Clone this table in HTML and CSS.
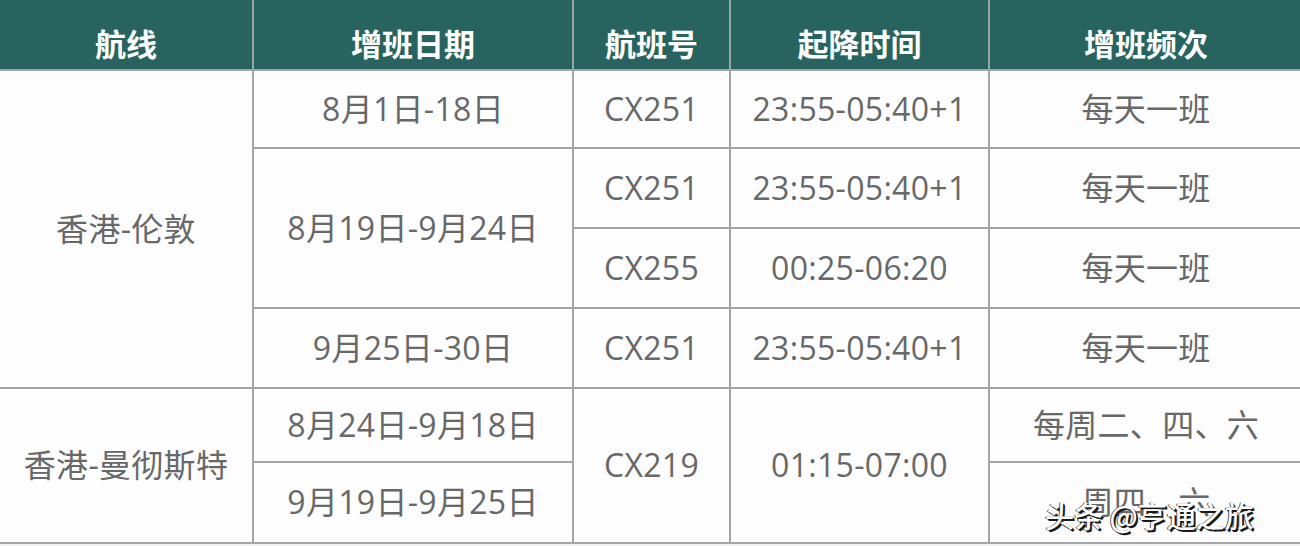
FILE: index.html
```html
<!DOCTYPE html>
<html lang="zh-CN">
<head>
<meta charset="utf-8">
<title>航班增班</title>
<link rel="stylesheet" href="styles.css">
</head>
<body>
<div class="page">
  <table class="flights">
    <colgroup>
      <col class="c-route">
      <col class="c-date">
      <col class="c-no">
      <col class="c-time">
      <col class="c-freq">
    </colgroup>
    <thead>
      <tr class="r-head">
        <th>航线</th>
        <th>增班日期</th>
        <th>航班号</th>
        <th>起降时间</th>
        <th>增班频次</th>
      </tr>
    </thead>
    <tbody>
      <tr class="r-1">
        <td rowspan="4">香港-伦敦</td>
        <td>8月1日-18日</td>
        <td>CX251</td>
        <td>23:55-05:40+1</td>
        <td>每天一班</td>
      </tr>
      <tr class="r-2">
        <td rowspan="2">8月19日-9月24日</td>
        <td>CX251</td>
        <td>23:55-05:40+1</td>
        <td>每天一班</td>
      </tr>
      <tr class="r-3">
        <td>CX255</td>
        <td>00:25-06:20</td>
        <td>每天一班</td>
      </tr>
      <tr class="r-4">
        <td>9月25日-30日</td>
        <td>CX251</td>
        <td>23:55-05:40+1</td>
        <td>每天一班</td>
      </tr>
      <tr class="r-5">
        <td rowspan="2">香港-曼彻斯特</td>
        <td>8月24日-9月18日</td>
        <td rowspan="2">CX219</td>
        <td rowspan="2">01:15-07:00</td>
        <td>每周二、四、六</td>
      </tr>
      <tr class="r-6">
        <td>9月19日-9月25日</td>
        <td>周四、六</td>
      </tr>
    </tbody>
  </table>
  <div class="watermark">头条 @亨通之旅</div>
</div>
</body>
</html>
```

FILE: styles.css
```css
html, body {
  margin: 0;
  padding: 0;
  background: #fdfdfd;
}

.page {
  position: relative;
  width: 1300px;
  height: 546px;
  overflow: hidden;
  background: #f2f2f2;
}

.flights {
  width: 1304px;
  margin-left: -2px;
  border-collapse: collapse;
  table-layout: fixed;
  font-family: "Open Sans", "Noto Sans CJK SC", sans-serif;
  font-size: 32px;
  color: #686868;
  background: #fdfdfd;
}

.c-route { width: 254px; }
.c-date { width: 320px; }
.c-no { width: 157px; }
.c-time { width: 259px; }
.c-freq { width: 314px; }

.flights th,
.flights td {
  border: 2px solid #a4a6a6;
  padding: 0;
  text-align: center;
  vertical-align: middle;
  white-space: nowrap;
  line-height: 1.2;
}

.flights td {
  font-weight: 400;
  letter-spacing: 0.3px;
}

.flights th {
  background: #28645f;
  color: #ffffff;
  font-family: "Noto Sans CJK SC", sans-serif;
  font-weight: 700;
  font-size: 31px;
  border-top: none;
  border-left-color: #9aa5a3;
  border-right-color: #9aa5a3;
  padding-top: 16px;
}

.r-head { height: 70px; }
.r-1 { height: 78px; }
.r-2 { height: 80px; }
.r-3 { height: 80px; }
.r-4 { height: 80px; }
.r-5 { height: 74px; }
.r-6 { height: 81px; }

.watermark {
  position: absolute;
  left: 1045px;
  top: 494px;
  font-family: "Noto Sans CJK SC", sans-serif;
  font-size: 29px;
  font-weight: 500;
  color: #ffffff;
  text-shadow: 2px 2px 0 #1a1a1a, 1px 1px 0 #1a1a1a, -1px 0 0 #555;
}
```
